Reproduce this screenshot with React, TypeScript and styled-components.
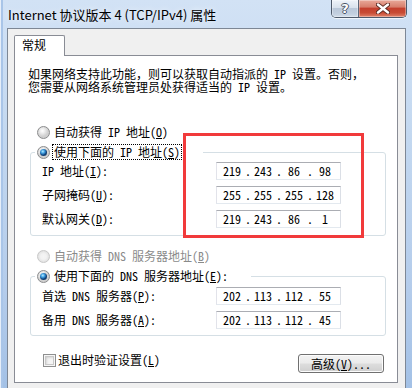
import React from "react";
import styled, { createGlobalStyle } from "styled-components";

const UI_FONT = `"Noto Sans Mono CJK SC", "Noto Sans CJK SC", "Liberation Sans", sans-serif`;

const Global = createGlobalStyle`
  html, body { margin: 0; padding: 0; width: 412px; height: 388px; overflow: hidden; background: #c4d8ef; }
  #root { width: 412px; height: 388px; }
  *, *::before, *::after { box-sizing: border-box; }
`;

const Window = styled.div`
  position: relative;
  width: 412px;
  height: 388px;
  display: flex;
  flex-direction: column;
  background: linear-gradient(180deg, #d2e2f5 0%, #c3d8f0 35%, #b4cceb 75%, #a3c1e6 100%);
  box-shadow: inset 1px 0 0 #e6eef9, inset 3px 0 0 #a9c5e8;
  font-family: ${UI_FONT};
  font-size: 12px;
  color: #000;
`;

const TitleBar = styled.div`
  height: 28px;
  flex: none;
  display: flex;
  align-items: flex-start;
  padding: 0 5px 0 8px;
`;

const Title = styled.div`
  flex: 1;
  margin-top: 7px;
  font-family: "Noto Sans CJK SC", "Liberation Sans", sans-serif;
  font-size: 13px;
  line-height: 16px;
  color: #000;
  text-shadow: 0 0 6px rgba(255, 255, 255, 0.9);
`;

const CaptionGroup = styled.div`
  display: flex;
  height: 18px;
  border: 1px solid #4e5a6b;
  border-top: none;
  border-radius: 0 0 5px 5px;
  overflow: hidden;
  box-shadow: 0 1px 0 rgba(255, 255, 255, 0.7);
`;

const CaptionButton = styled.div<{ $variant: "help" | "close" }>`
  display: flex;
  align-items: center;
  justify-content: center;
  width: ${(p) => (p.$variant === "close" ? 47 : 27)}px;
  border-right: ${(p) => (p.$variant === "help" ? "1px solid #5b6678" : "none")};
  background: ${(p) =>
    p.$variant === "close"
      ? "linear-gradient(180deg, #e9a99a 0%, #d8806e 40%, #c4402e 50%, #c84b34 75%, #e0836a 100%)"
      : "linear-gradient(180deg, #eef3f9 0%, #d9e2ed 45%, #bac8d9 50%, #c2cfdf 80%, #d2dde9 100%)"};
  box-shadow: inset 0 0 0 1px rgba(255, 255, 255, 0.35);
`;

const HelpGlyph = styled.span`
  font-family: "DejaVu Sans", sans-serif;
  font-weight: bold;
  font-size: 13px;
  line-height: 13px;
  color: #fff;
  text-shadow: -1px 0 #4a5566, 1px 0 #4a5566, 0 -1px #4a5566, 0 1px #4a5566;
`;

const Client = styled.div`
  flex: 1;
  margin: 0 6px 0 7px;
  border: 1px solid #7d8795;
  border-bottom: none;
  background: #f0f0f0;
  padding: 6px 7px 0 6px;
  display: flex;
  flex-direction: column;
`;

const TabStrip = styled.div`
  display: flex;
  height: 21px;
  margin-bottom: -1px;
  position: relative;
  z-index: 1;
`;

const Tab = styled.div`
  width: 51px;
  height: 21px;
  border: 1px solid #898c95;
  border-bottom: none;
  border-radius: 2px 2px 0 0;
  background: #fff;
  padding: 1px 0 0 7px;
  line-height: 16px;
  font-family: "Noto Sans CJK SC", sans-serif;
`;

const Panel = styled.div`
  height: 328px;
  flex: none;
  border: 1px solid #898c95;
  background: #fff;
  display: flex;
  flex-direction: column;
`;

const Intro = styled.p`
  margin: 11px 0 0 13px;
  line-height: 13px;
  white-space: nowrap;
`;

const RadioRow = styled.div<{ $top: number }>`
  margin: ${(p) => p.$top}px 0 0 22px;
  height: 16px;
  display: flex;
`;

const OptionLabel = styled.span<{ $disabled?: boolean }>`
  display: inline-flex;
  align-items: center;
  gap: 3px;
  height: 16px;
  line-height: 14px;
  white-space: nowrap;
  color: ${(p) => (p.$disabled ? "#8a8a8a" : "#000")};
`;

const OptionText = styled.span<{ $focused?: boolean }>`
  padding: 0 1px;
  outline: ${(p) => (p.$focused ? "1px dotted #000" : "none")};
  outline-offset: 0;
`;

const Key = styled.span`
  text-decoration: underline;
  text-underline-offset: 1px;
`;

const Radio = styled.span<{ $checked?: boolean; $disabled?: boolean }>`
  position: relative;
  flex: none;
  width: 13px;
  height: 13px;
  border-radius: 50%;
  border: 1px solid ${(p) => (p.$disabled ? "#c8c8c8" : "#8b8c8d")};
  background: ${(p) =>
    p.$disabled
      ? "radial-gradient(circle at 50% 50%, #f5f5f5 0, #f1f1f1 3px, #e2e2e2 5.5px)"
      : "radial-gradient(circle at 40% 35%, #ffffff 0, #f0f0f0 2px, #d0d0d0 5.5px)"};
  &::after {
    content: "";
    display: ${(p) => (p.$checked ? "block" : "none")};
    position: absolute;
    left: 2px;
    top: 2px;
    width: 7px;
    height: 7px;
    border-radius: 50%;
    background: radial-gradient(circle at 40% 35%, #b8ecff 0, #4aa8e6 1.6px, #1d66a8 3px, #123f72 3.6px);
  }
`;

const Group = styled.fieldset<{ $bottomPad: number; $topPad: number }>`
  margin: 4px 11px 0 15px;
  padding: ${(p) => p.$topPad}px 0 ${(p) => p.$bottomPad}px 0;
  border: 1px solid #d5dfe5;
  border-radius: 3px;
  min-width: 0;
`;

const GroupLegend = styled.legend`
  margin-left: 4px;
  padding: 0 22px 0 2px;
  height: 16px;
  line-height: 16px;
`;

const FieldGrid = styled.div`
  display: grid;
  grid-template-columns: 174px 125px;
  row-gap: 6px;
  align-items: center;
  padding-left: 11px;
`;

const FieldLabel = styled.span`
  line-height: 14px;
  white-space: nowrap;
`;

const IpBox = styled.div`
  width: 125px;
  height: 18px;
  border: 1px solid;
  border-color: #abadb3 #dbdfe6 #e3e9ef #e2e3ea;
  background: #fff;
  display: flex;
  align-items: center;
  padding-left: 2px;
  line-height: 16px;
`;

const Octet = styled.span`
  width: 26px;
  text-align: center;
`;

const Dot = styled.span`
  width: 5px;
  text-align: left;
`;

const Footer = styled.div`
  margin-top: 17px;
  padding: 0 13px 0 28px;
  display: flex;
  justify-content: space-between;
  align-items: flex-start;
`;

const CheckLabel = styled.span`
  display: inline-flex;
  align-items: center;
  gap: 2px;
  height: 14px;
  line-height: 14px;
`;

const Checkbox = styled.span`
  flex: none;
  width: 13px;
  height: 13px;
  border: 1px solid #8e8f8f;
  background: #f4f4f4;
  box-shadow: inset 0 0 0 1px #f6f6f6, inset 0 0 0 2px #c8c8c8, inset 2px 2px 3px #b8b8b8;
`;

const Button = styled.div`
  margin-top: 1px;
  width: 86px;
  height: 19px;
  border: 1px solid #707070;
  border-radius: 3px;
  background: linear-gradient(180deg, #f2f2f2 0%, #ebebeb 48%, #dddddd 52%, #cfcfcf 100%);
  box-shadow: inset 0 0 0 1px #fcfcfc;
  display: flex;
  align-items: center;
  justify-content: center;
  line-height: 14px;
`;

const Highlight = styled.div`
  position: absolute;
  left: 183px;
  top: 133px;
  width: 181px;
  height: 105px;
  border: 3px solid #f13a3b;
  pointer-events: none;
`;

const CloseIcon = () => (
  <svg width="14" height="11" viewBox="0 0 14 11">
    <path d="M2 1.5 L12 9.5 M12 1.5 L2 9.5" stroke="#5a2a22" strokeWidth="4.2" strokeLinecap="round" fill="none" />
    <path d="M2 1.5 L12 9.5 M12 1.5 L2 9.5" stroke="#ffffff" strokeWidth="2.4" strokeLinecap="round" fill="none" />
  </svg>
);

const IpAddress = ({ parts }: { parts: string[] }) => (
  <IpBox>
    {parts.map((p, i) => (
      <React.Fragment key={i}>
        {i > 0 && <Dot>.</Dot>}
        <Octet>{p}</Octet>
      </React.Fragment>
    ))}
  </IpBox>
);

export default function App() {
  return (
    <>
      <Global />
      <Window>
        <TitleBar>
          <Title>Internet 协议版本 4 (TCP/IPv4) 属性</Title>
          <CaptionGroup>
            <CaptionButton $variant="help">
              <HelpGlyph>?</HelpGlyph>
            </CaptionButton>
            <CaptionButton $variant="close">
              <CloseIcon />
            </CaptionButton>
          </CaptionGroup>
        </TitleBar>
        <Client>
          <TabStrip>
            <Tab>常规</Tab>
          </TabStrip>
          <Panel>
            <Intro>
              如果网络支持此功能，则可以获取自动指派的 IP 设置。否则，
              <br />
              您需要从网络系统管理员处获得适当的 IP 设置。
            </Intro>

            <RadioRow $top={31}>
              <OptionLabel>
                <Radio />
                <OptionText>
                  自动获得 IP 地址(<Key>O</Key>)
                </OptionText>
              </OptionLabel>
            </RadioRow>

            <Group $topPad={2} $bottomPad={7}>
              <GroupLegend>
                <OptionLabel>
                  <Radio $checked />
                  <OptionText $focused>
                    使用下面的 IP 地址(<Key>S</Key>)
                  </OptionText>
                </OptionLabel>
              </GroupLegend>
              <FieldGrid>
                <FieldLabel>
                  IP 地址(<Key>I</Key>):
                </FieldLabel>
                <IpAddress parts={["219", "243", "86", "98"]} />
                <FieldLabel>
                  子网掩码(<Key>U</Key>):
                </FieldLabel>
                <IpAddress parts={["255", "255", "255", "128"]} />
                <FieldLabel>
                  默认网关(<Key>D</Key>):
                </FieldLabel>
                <IpAddress parts={["219", "243", "86", "1"]} />
              </FieldGrid>
            </Group>

            <RadioRow $top={12}>
              <OptionLabel $disabled>
                <Radio $disabled />
                <OptionText>
                  自动获得 DNS 服务器地址(<Key>B</Key>)
                </OptionText>
              </OptionLabel>
            </RadioRow>

            <Group $topPad={3} $bottomPad={6}>
              <GroupLegend>
                <OptionLabel>
                  <Radio $checked />
                  <OptionText>
                    使用下面的 DNS 服务器地址(<Key>E</Key>):
                  </OptionText>
                </OptionLabel>
              </GroupLegend>
              <FieldGrid>
                <FieldLabel>
                  首选 DNS 服务器(<Key>P</Key>):
                </FieldLabel>
                <IpAddress parts={["202", "113", "112", "55"]} />
                <FieldLabel>
                  备用 DNS 服务器(<Key>A</Key>):
                </FieldLabel>
                <IpAddress parts={["202", "113", "112", "45"]} />
              </FieldGrid>
            </Group>

            <Footer>
              <CheckLabel>
                <Checkbox />
                <span>
                  退出时验证设置(<Key>L</Key>)
                </span>
              </CheckLabel>
              <Button>
                高级(<Key>V</Key>)...
              </Button>
            </Footer>
          </Panel>
        </Client>
        <Highlight />
      </Window>
    </>
  );
}
